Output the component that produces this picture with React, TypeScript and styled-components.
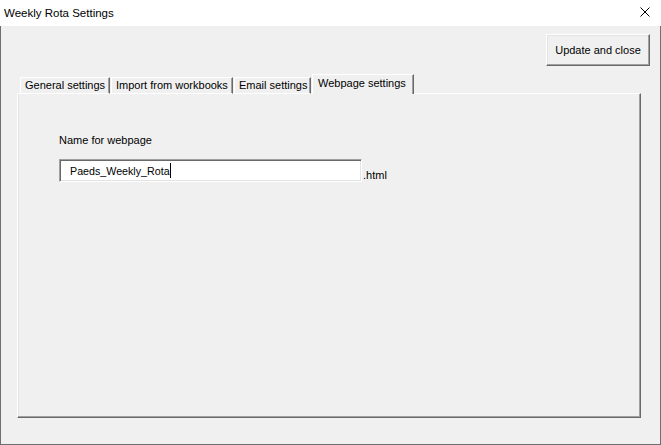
import React from "react";
import styled, { createGlobalStyle } from "styled-components";

const Global = createGlobalStyle`
  html, body { margin: 0; padding: 0; background: #ffffff; }
  body { font-family: "Liberation Sans", Arial, sans-serif; color: #000; }
`;

const Window = styled.div`
  width: 661px;
  height: 445px;
  display: flex;
  flex-direction: column;
  box-sizing: border-box;
  background: #f0f0f0;
`;

const TitleBar = styled.div`
  height: 26px;
  flex: 0 0 26px;
  background: #ffffff;
  display: flex;
  align-items: center;
  justify-content: space-between;
  padding: 0 11px 0 4px;
  box-sizing: border-box;
`;

const Title = styled.span`
  font-size: 11.5px;
  line-height: 14px;
  color: #000;
  margin-top: -1px;
`;

const CloseIcon = styled.svg`
  width: 10px;
  height: 10px;
  display: block;
  margin-top: -2px;
`;

const Body = styled.div`
  flex: 1;
  display: flex;
  flex-direction: column;
  box-sizing: border-box;
  border-left: 1px solid #6e6e6e;
  border-right: 1px solid #6e6e6e;
  border-bottom: 1px solid #6e6e6e;
  padding: 8px 10px 0 16px;
`;

const ButtonRow = styled.div`
  display: flex;
  justify-content: flex-end;
`;

const Button = styled.button`
  width: 104px;
  height: 32px;
  box-sizing: border-box;
  background: #f0f0f0;
  font-family: "Liberation Sans", Arial, sans-serif;
  font-size: 11px;
  color: #000;
  padding: 0;
  border-top: 1px solid #ffffff;
  border-left: 1px solid #ffffff;
  border-right: 1px solid #696969;
  border-bottom: 1px solid #696969;
  box-shadow: inset -1px -1px 0 #a0a0a0, inset 1px 1px 0 #e3e3e3;
  cursor: default;
`;

const TabStrip = styled.div`
  margin-top: 8px;
  height: 20px;
  display: flex;
  align-items: flex-end;
  gap: 1px;
  padding-left: 3px;
  position: relative;
  z-index: 2;
`;

const Tab = styled.div<{ $w: number; $active?: boolean }>`
  width: ${(p) => p.$w}px;
  height: ${(p) => (p.$active ? 20 : 17)}px;
  box-sizing: border-box;
  background: #f0f0f0;
  border-top: 1px solid #ffffff;
  border-left: 1px solid #ffffff;
  border-right: 1px solid #696969;
  box-shadow: inset -1px 0 0 #a0a0a0;
  border-bottom: ${(p) => (p.$active ? "none" : "1px solid #ffffff")};
  font-size: 11px;
  line-height: ${(p) => (p.$active ? 16 : 15)}px;
  padding-left: ${(p) => (p.$active ? 5 : 4)}px;
  white-space: nowrap;
  color: #000;
`;

const Panel = styled.div`
  margin-top: -1px;
  width: 624px;
  height: 325px;
  box-sizing: border-box;
  background: #f0f0f0;
  border-top: 1px solid #ffffff;
  border-left: 1px solid #ffffff;
  border-right: 1px solid #696969;
  border-bottom: 1px solid #696969;
  box-shadow: inset -1px -1px 0 #a0a0a0, inset 1px 0 0 #e3e3e3;
  padding: 40px 0 0 41px;
  display: flex;
  flex-direction: column;
  gap: 12px;
  position: relative;
  z-index: 1;
`;

const Label = styled.div`
  font-size: 11px;
  line-height: 13px;
  color: #000;
`;

const FieldRow = styled.div`
  display: flex;
  align-items: flex-end;
`;

const TextBox = styled.div`
  width: 303px;
  height: 23px;
  box-sizing: border-box;
  background: #ffffff;
  border-top: 1px solid #a0a0a0;
  border-left: 1px solid #a0a0a0;
  border-right: 1px solid #ffffff;
  border-bottom: 1px solid #ffffff;
  box-shadow: inset 1px 1px 0 #696969, inset -1px -1px 0 #e3e3e3;
  padding-left: 10px;
  display: flex;
  align-items: center;
  font-size: 10.7px;
  color: #000;
`;

const Caret = styled.span`
  display: inline-block;
  width: 1px;
  height: 15px;
  background: #000;
  margin-left: 0px;
`;

const Suffix = styled.span`
  font-size: 11px;
  line-height: 13px;
  margin-left: 1px;
  color: #000;
`;

const tabs = [
  { label: "General settings", w: 90 },
  { label: "Import from workbooks", w: 122 },
  { label: "Email settings", w: 77 },
  { label: "Webpage settings", w: 102, active: true },
];

export default function App() {
  return (
    <>
      <Global />
      <Window>
        <TitleBar>
          <Title>Weekly Rota Settings</Title>
          <CloseIcon viewBox="0 0 10 10">
            <path d="M0.5 0.5 L9.5 9.5 M9.5 0.5 L0.5 9.5" stroke="#000" strokeWidth="1" fill="none" />
          </CloseIcon>
        </TitleBar>
        <Body>
          <ButtonRow>
            <Button>Update and close</Button>
          </ButtonRow>
          <TabStrip>
            {tabs.map((t) => (
              <Tab key={t.label} $w={t.w} $active={t.active}>
                {t.label}
              </Tab>
            ))}
          </TabStrip>
          <Panel>
            <Label>Name for webpage</Label>
            <FieldRow>
              <TextBox>
                Paeds_Weekly_Rota
                <Caret />
              </TextBox>
              <Suffix>.html</Suffix>
            </FieldRow>
          </Panel>
        </Body>
      </Window>
    </>
  );
}
